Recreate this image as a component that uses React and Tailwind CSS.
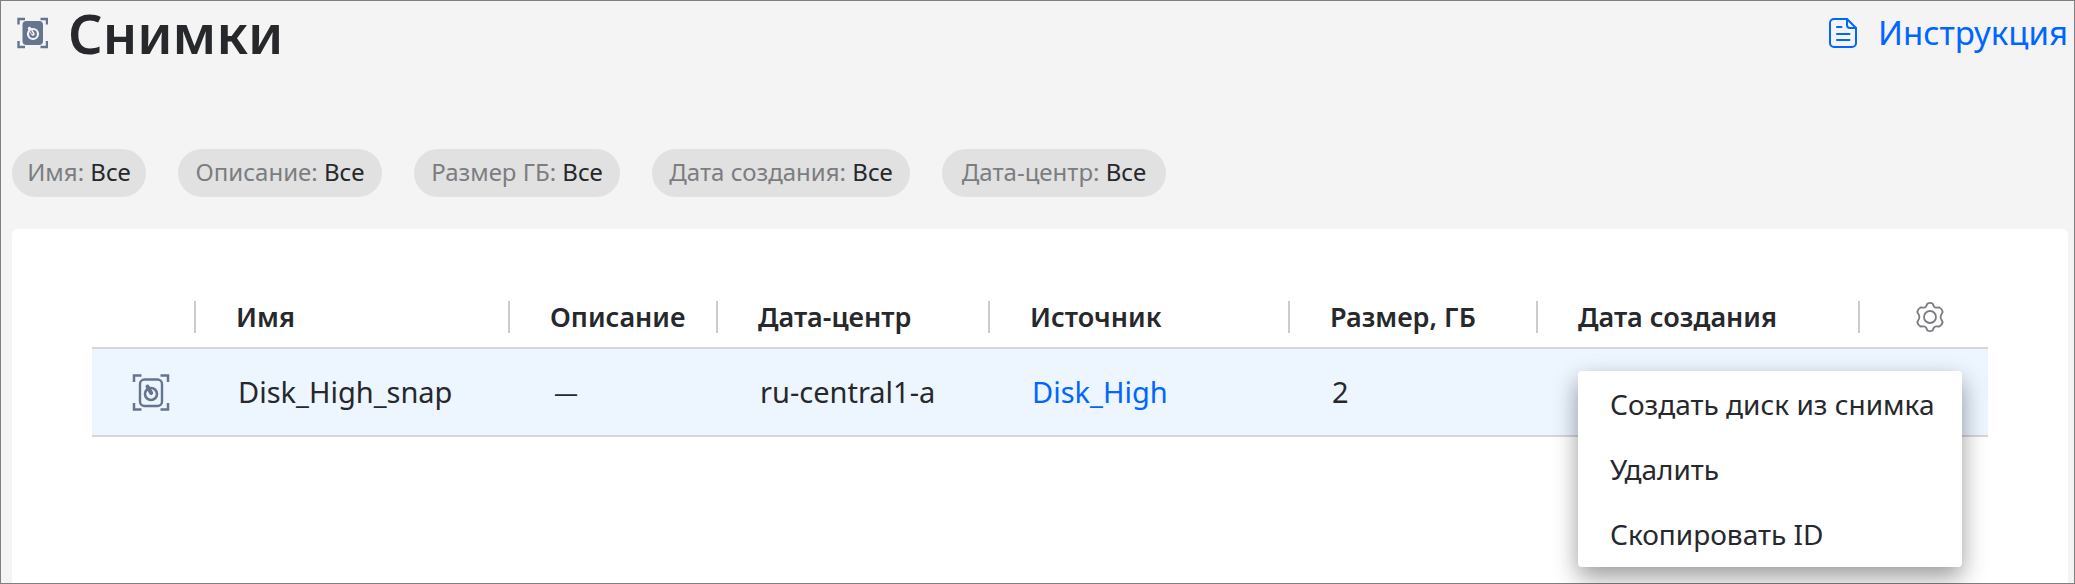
const filters = [
    { name: 'Имя', value: 'Все', width: 'w-[134px]' },
    { name: 'Описание', value: 'Все', width: 'w-[204px]' },
    { name: 'Размер ГБ', value: 'Все', width: 'w-[206px]' },
    { name: 'Дата создания', value: 'Все', width: 'w-[258px]' },
    { name: 'Дата-центр', value: 'Все', width: 'w-[224px]' },
];

const columns = ['Имя', 'Описание', 'Дата-центр', 'Источник', 'Размер, ГБ', 'Дата создания'];

const menuItems = ['Создать диск из снимка', 'Удалить', 'Скопировать ID'];

const SnapshotSolidIcon = () => (
    <svg width="32" height="32" viewBox="0 0 32 32" fill="none" className="text-[#66758f]" aria-hidden="true">
        <path d="M2.500 7.500V2H9M24.500 2H31v5.500M31 24v6h-6.500M9 30H2.500v-6" stroke="currentColor" strokeWidth="2.400" />
        <rect x="6.500" y="4" width="20.500" height="24" rx="4" fill="currentColor" />
        <circle cx="17" cy="17" r="5" stroke="#f4f4f4" strokeWidth="2.200" />
        <path d="M13.500 11.500l3.500 5.500" stroke="#f4f4f4" strokeWidth="3.400" strokeLinecap="round" />
        <path d="M14.500 13.500l2 3.500" stroke="currentColor" strokeWidth="1.200" />
    </svg>
);

const SnapshotIcon = () => (
    <svg width="38" height="38" viewBox="0 0 38 38" fill="none" className="text-[#66758f]" stroke="currentColor" aria-hidden="true">
        <path d="M2 9V2.500H9.500M28.500 2.500H36V9M36 30v6.500h-7.500M9.500 36.500H2V30" strokeWidth="2.500" />
        <rect x="8" y="6.500" width="22" height="26.500" rx="4.500" strokeWidth="2.400" />
        <circle cx="19" cy="21" r="6" strokeWidth="2.600" />
        <path d="M15.500 13.500l3.700 6.500" strokeWidth="4" strokeLinecap="round" />
    </svg>
);

const DocIcon = () => (
    <svg width="30" height="32" viewBox="0 0 30 32" fill="none" stroke="currentColor" strokeWidth="2" strokeLinecap="round" strokeLinejoin="round" aria-hidden="true">
        <path d="M19 2H6a4 4 0 0 0-4 4v20a4 4 0 0 0 4 4h18a4 4 0 0 0 4-4V11z" />
        <path d="M19 2v6a3 3 0 0 0 3 3h6M9 10h4.500M9 17h12.500M9 23h12.500" />
    </svg>
);

const GearIcon = () => (
    <svg width="32" height="32" viewBox="0 0 32 32" fill="none" stroke="currentColor" strokeWidth="1.800" strokeLinejoin="round" aria-hidden="true">
        <circle cx="16" cy="16" r="6" />
        <path d="M13.500 2.500Q16 1.100 18.500 2.500L20 5.500Q20.800 6.800 22.300 6.700L25.500 6.500Q28.200 8 28.700 11L27 14.200Q26.200 16 27 17.800L28.700 21Q28.200 24 25.500 25.500L22.300 25.300Q20.800 25.200 20 26.500L18.500 29.500Q16 30.900 13.500 29.500L12 26.500Q11.200 25.200 9.700 25.300L6.500 25.500Q3.800 24 3.300 21L5 17.800Q5.800 16 5 14.200L3.300 11Q3.800 8 6.500 6.500L9.700 6.700Q11.200 6.800 12 5.500Z" />
    </svg>
);

const ContextMenu = () => (
    <div role="menu" className="absolute left-10 top-[22px] z-10 w-96 rounded bg-white pb-px shadow-[0_10px_24px_rgba(0,0,0,0.4)]">
        {menuItems.map((item) => (
            <button key={item} role="menuitem" className="block h-[65px] w-full whitespace-nowrap px-8 text-left text-[28px]">
                {item}
            </button>
        ))}
    </div>
);

const SnapshotsTable = () => (
    <table className="w-full table-fixed border-collapse text-left leading-9">
        <colgroup>
            <col className="w-[104px]" />
            <col className="w-[314px]" />
            <col className="w-[208px]" />
            <col className="w-[272px]" />
            <col className="w-[300px]" />
            <col className="w-[248px]" />
            <col className="w-[322px]" />
            <col className="w-[128px]" />
        </colgroup>
        <thead>
            <tr className="h-[47px] align-top text-[27px]">
                <td className="p-0">
                    <div className="h-8 border-r-2 border-[#cccccc]" />
                </td>
                {columns.map((name) => (
                    <th key={name} scope="col" className="p-0 font-semibold">
                        <div className="flex h-8 items-center whitespace-nowrap border-r-2 border-[#cccccc] pl-10">{name}</div>
                    </th>
                ))}
                <td className="p-0 pl-[54px]">
                    <button aria-label="Настройки таблицы" className="block text-[#7c7c82]">
                        <GearIcon />
                    </button>
                </td>
            </tr>
        </thead>
        <tbody>
            <tr className="h-[88px] border-y-2 border-[#d4d6d8] bg-[#edf5ff] text-[29px]">
                <td className="p-0 pl-10">
                    <SnapshotIcon />
                </td>
                <td className="p-0 pl-[42px]">Disk_High_snap</td>
                <td className="p-0 pl-[44px] text-2xl">—</td>
                <td className="p-0 pl-[42px]">ru-central1-a</td>
                <td className="p-0 pl-[42px]">
                    <a href="#disk" className="text-[#0066ff]">Disk_High</a>
                </td>
                <td className="p-0 pl-[42px]">2</td>
                <td className="relative p-0">
                    <ContextMenu />
                </td>
                <td className="p-0" />
            </tr>
        </tbody>
    </table>
);

const App = () => {
    return (
        <div className="flex min-h-screen flex-col border border-[#808080] bg-[#f4f4f4] pl-[11px] pr-[6px] font-['Noto_Sans',sans-serif] text-[#26282c]">
            <header className="flex h-16 items-center justify-between">
                <div className="flex items-center gap-5 pl-1">
                    <SnapshotSolidIcon />
                    <h1 className="text-[54px] font-semibold leading-16">Снимки</h1>
                </div>
                <a href="#docs" className="flex items-center gap-5 text-[33px] text-[#0066ff]">
                    <DocIcon />
                    Инструкция
                </a>
            </header>

            <div className="mt-[84px] flex gap-8">
                {filters.map((filter) => (
                    <button key={filter.name} className={`h-12 whitespace-nowrap rounded-full bg-[#e1e1e1] pb-0.5 text-center text-2xl ${filter.width}`}>
                        <span className="text-[#7b7d81]">{filter.name}:</span> {filter.value}
                    </button>
                ))}
            </div>

            <main className="mt-8 flex-1 rounded-t-md bg-white px-20 pt-[72px]">
                <SnapshotsTable />
            </main>
        </div>
    );
};

export default App;
